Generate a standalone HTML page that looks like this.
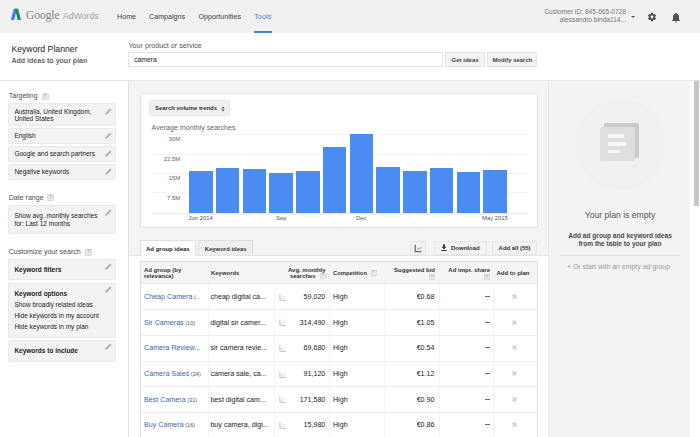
<!DOCTYPE html>
<html><head><meta charset="utf-8">
<style>
*{margin:0;padding:0;box-sizing:border-box}
html,body{width:700px;height:437px;overflow:hidden;background:#fff;font-family:"Liberation Sans",sans-serif;color:#222}
.a{position:absolute;white-space:nowrap}
</style></head><body>

<div class="a" style="left:0px;top:0px;width:700px;height:33px;background:#f1f1f1;"></div>
<svg class="a" style="left:10px;top:8px" width="12" height="13" viewBox="10 8 12 13"><polygon points="13.8,8.8 17,8.8 14.2,20 10.8,20" fill="#3f7fe0"/><polygon points="15,8.8 18.2,8.8 21,20 17.6,20" fill="#1f8f55"/></svg>
<div class="a" style="left:25.6px;top:8px;font-size:13px;line-height:13px;color:#808080;font-weight:normal;font-family:'Liberation Serif';transform:scaleX(0.877);transform-origin:0 0;">Google</div>
<div class="a" style="left:63px;top:12px;font-size:8.7px;line-height:8.7px;color:#a3a3a3;font-weight:normal;">AdWords</div>
<div class="a" style="left:117px;top:14px;font-size:7.15px;line-height:7.15px;color:#3c3c3c;font-weight:normal;">Home</div>
<div class="a" style="left:149px;top:14px;font-size:7.15px;line-height:7.15px;color:#3c3c3c;font-weight:normal;">Campaigns</div>
<div class="a" style="left:198.5px;top:14px;font-size:7.15px;line-height:7.15px;color:#3c3c3c;font-weight:normal;">Opportunities</div>
<div class="a" style="left:254px;top:13px;font-size:7.5px;line-height:7.5px;color:#4a7fd8;font-weight:normal;">Tools</div>
<div class="a" style="left:254px;top:31px;width:18px;height:2px;background:#4a7fd8;"></div>
<div class="a" style="left:536px;width:90px;text-align:right;top:9px;font-size:6.6px;line-height:6.6px;color:#777;font-weight:normal;">Customer ID: 845-665-0728</div>
<div class="a" style="left:536px;width:90px;text-align:right;top:17px;font-size:6.6px;line-height:6.6px;color:#777;font-weight:normal;">alessandro.binda114...</div>
<div class="a" style="left:631.3px;top:15.5px;width:0;height:0;border-left:2.2px solid transparent;border-right:2.2px solid transparent;border-top:2.6px solid #555"></div>
<svg class="a" style="left:647px;top:12px" width="10" height="10" viewBox="0 0 24 24"><path fill="#505050" d="M19.4 13c.04-.3.06-.6.06-1s-.02-.7-.06-1l2.1-1.65c.2-.15.24-.42.12-.64l-2-3.46c-.12-.22-.4-.3-.6-.22l-2.5 1c-.52-.4-1.08-.73-1.7-.98l-.37-2.65A.5.5 0 0 0 14 2h-4a.5.5 0 0 0-.5.42l-.37 2.650c-.62.25-1.18.58-1.7.98l-2.5-1c-.22-.08-.48 0-.6.22l-2 3.46c-.13.22-.07.5.12.64L4.57 11c-.04.32-.07.66-.07 1s.03.68.07 1l-2.1 1.65c-.2.15-.25.42-.13.64l2 3.46c.12.22.4.3.6.22l2.5-1c.52.4 1.08.73 1.7.98l.37 2.65c.04.24.25.42.5.42h4c.25 0 .46-.18.5-.42l.37-2.65c.62-.25 1.18-.58 1.7-.98l2.5 1c.22.08.48 0 .6-.22l2-3.46c.12-.22.07-.5-.12-.64L19.4 13zM12 15.5A3.5 3.5 0 1 1 12 8.5a3.5 3.5 0 0 1 0 7z"/></svg>
<svg class="a" style="left:670.4px;top:10.6px" width="12" height="13" viewBox="0 0 24 24"><path fill="#505050" d="M12 22c1.1 0 2-.9 2-2h-4c0 1.1.9 2 2 2zm6-6v-5c0-3.07-1.64-5.64-4.5-6.320V4c0-.83-.67-1.5-1.5-1.5s-1.5.67-1.5 1.5v.68C7.630 5.36 6 7.92 6 11v5l-2 2v1h16v-1l-2-2z"/></svg>
<div class="a" style="left:11.4px;top:45px;font-size:8.7px;line-height:8.7px;color:#222;font-weight:normal;">Keyword Planner</div>
<div class="a" style="left:11.4px;top:57px;font-size:7.05px;line-height:7.05px;color:#666;font-weight:bold;">Add ideas to your plan</div>
<div class="a" style="left:128.5px;top:43px;font-size:7.17px;line-height:7.17px;color:#555;font-weight:normal;">Your product or service</div>
<div class="a" style="left:128px;top:52px;width:315px;height:15px;background:#fff;border:1px solid #e2e2e2;"></div>
<div class="a" style="left:134.2px;top:57px;font-size:6.75px;line-height:6.75px;color:#222;font-weight:normal;">camera</div>
<div class="a" style="left:445.2px;top:52px;width:40px;height:15px;background:#f3f3f3;border:1px solid #e3e3e3;border-radius:1px;"></div>
<div class="a" style="left:451.6px;top:57px;font-size:6.0px;line-height:6.0px;color:#444;font-weight:bold;">Get ideas</div>
<div class="a" style="left:487px;top:52px;width:50px;height:15px;background:#f3f3f3;border:1px solid #e3e3e3;border-radius:1px;"></div>
<div class="a" style="left:492.4px;top:58px;font-size:5.95px;line-height:5.95px;color:#444;font-weight:bold;">Modify search</div>
<div class="a" style="left:0px;top:79.5px;width:700px;height:1px;background:#e5e5e5;"></div>
<div class="a" style="left:128px;top:80.5px;width:1px;height:357px;background:#e0e0e0;"></div>
<div class="a" style="left:8.7px;top:92px;font-size:7.05px;line-height:7.05px;color:#4d4d4d;font-weight:normal;">Targeting</div>
<div class="a" style="left:41.5px;top:93px;width:7px;height:7px;background:#eaeaea;border:0.6px solid #dcdcdc;border-radius:0.5px"></div>
<div class="a" style="left:41.5px;top:93.6px;width:7px;text-align:center;font-size:4.76px;line-height:5.60px;color:#aaa;font-weight:bold">?</div>
<div class="a" style="left:8px;top:103.2px;width:108px;height:23.0px;background:#f3f3f3;border:1px solid #e8e8e8;border-radius:1.5px;"></div>
<div class="a" style="left:14.4px;top:109px;font-size:6.5px;line-height:6.5px;color:#222;font-weight:normal;">Australia, United Kingdom,</div>
<div class="a" style="left:14.4px;top:116px;font-size:6.5px;line-height:6.5px;color:#222;font-weight:normal;">United States</div>
<svg class="a" style="left:104.5px;top:107.5px" width="8" height="8" viewBox="0 0 8 8"><path d="M0.2 6.8 L0.7 5.0 L5.2 0.5 L6.5 1.8 L2.0 6.3 Z" fill="#ababab"/></svg>
<div class="a" style="left:8px;top:128.2px;width:108px;height:15.600000000000023px;background:#f3f3f3;border:1px solid #e8e8e8;border-radius:1.5px;"></div>
<div class="a" style="left:14.4px;top:133px;font-size:6.5px;line-height:6.5px;color:#222;font-weight:normal;">English</div>
<svg class="a" style="left:104.5px;top:132px" width="8" height="8" viewBox="0 0 8 8"><path d="M0.2 6.8 L0.7 5.0 L5.2 0.5 L6.5 1.8 L2.0 6.3 Z" fill="#ababab"/></svg>
<div class="a" style="left:8px;top:146.0px;width:108px;height:16.0px;background:#f3f3f3;border:1px solid #e8e8e8;border-radius:1.5px;"></div>
<div class="a" style="left:14.4px;top:151px;font-size:6.5px;line-height:6.5px;color:#222;font-weight:normal;">Google and search partners</div>
<svg class="a" style="left:104.5px;top:150px" width="8" height="8" viewBox="0 0 8 8"><path d="M0.2 6.8 L0.7 5.0 L5.2 0.5 L6.5 1.8 L2.0 6.3 Z" fill="#ababab"/></svg>
<div class="a" style="left:8px;top:164.2px;width:108px;height:15.800000000000011px;background:#f3f3f3;border:1px solid #e8e8e8;border-radius:1.5px;"></div>
<div class="a" style="left:14.4px;top:169px;font-size:6.5px;line-height:6.5px;color:#222;font-weight:normal;">Negative keywords</div>
<svg class="a" style="left:104.5px;top:168px" width="8" height="8" viewBox="0 0 8 8"><path d="M0.2 6.8 L0.7 5.0 L5.2 0.5 L6.5 1.8 L2.0 6.3 Z" fill="#ababab"/></svg>
<div class="a" style="left:8.7px;top:194px;font-size:7.05px;line-height:7.05px;color:#4d4d4d;font-weight:normal;">Date range</div>
<div class="a" style="left:47px;top:194px;width:7px;height:7px;background:#eaeaea;border:0.6px solid #dcdcdc;border-radius:0.5px"></div>
<div class="a" style="left:47px;top:194.6px;width:7px;text-align:center;font-size:4.76px;line-height:5.60px;color:#aaa;font-weight:bold">?</div>
<div class="a" style="left:8px;top:204.5px;width:108px;height:29.69999999999999px;background:#f3f3f3;border:1px solid #e8e8e8;border-radius:1.5px;"></div>
<div class="a" style="left:14.4px;top:213px;font-size:6.5px;line-height:6.5px;color:#222;font-weight:normal;">Show avg. monthly searches</div>
<div class="a" style="left:14.4px;top:221px;font-size:6.5px;line-height:6.5px;color:#222;font-weight:normal;">for: Last 12 months</div>
<svg class="a" style="left:104.5px;top:208.5px" width="8" height="8" viewBox="0 0 8 8"><path d="M0.2 6.8 L0.7 5.0 L5.2 0.5 L6.5 1.8 L2.0 6.3 Z" fill="#ababab"/></svg>
<div class="a" style="left:8.7px;top:248px;font-size:7.05px;line-height:7.05px;color:#4d4d4d;font-weight:normal;">Customize your search</div>
<div class="a" style="left:85px;top:248.5px;width:7px;height:7px;background:#eaeaea;border:0.6px solid #dcdcdc;border-radius:0.5px"></div>
<div class="a" style="left:85px;top:249.1px;width:7px;text-align:center;font-size:4.76px;line-height:5.60px;color:#aaa;font-weight:bold">?</div>
<div class="a" style="left:8px;top:258.7px;width:108px;height:21.30000000000001px;background:#f3f3f3;border:1px solid #e8e8e8;border-radius:1.5px;"></div>
<div class="a" style="left:14.4px;top:267px;font-size:6.5px;line-height:6.5px;color:#222;font-weight:bold;">Keyword filters</div>
<svg class="a" style="left:104.5px;top:263px" width="8" height="8" viewBox="0 0 8 8"><path d="M0.2 6.8 L0.7 5.0 L5.2 0.5 L6.5 1.8 L2.0 6.3 Z" fill="#ababab"/></svg>
<div class="a" style="left:8px;top:283px;width:108px;height:54.80000000000001px;background:#f3f3f3;border:1px solid #e8e8e8;border-radius:1.5px;"></div>
<div class="a" style="left:14.4px;top:291px;font-size:6.5px;line-height:6.5px;color:#222;font-weight:bold;">Keyword options</div>
<svg class="a" style="left:104.5px;top:286.3px" width="8" height="8" viewBox="0 0 8 8"><path d="M0.2 6.8 L0.7 5.0 L5.2 0.5 L6.5 1.8 L2.0 6.3 Z" fill="#ababab"/></svg>
<div class="a" style="left:14.4px;top:302px;font-size:6.5px;line-height:6.5px;color:#222;font-weight:normal;">Show broadly related ideas</div>
<div class="a" style="left:14.4px;top:313px;font-size:6.5px;line-height:6.5px;color:#222;font-weight:normal;">Hide keywords in my account</div>
<div class="a" style="left:14.4px;top:324px;font-size:6.5px;line-height:6.5px;color:#222;font-weight:normal;">Hide keywords in my plan</div>
<div class="a" style="left:8px;top:340px;width:108px;height:21.80000000000001px;background:#f3f3f3;border:1px solid #e8e8e8;border-radius:1.5px;"></div>
<div class="a" style="left:14.4px;top:348px;font-size:6.5px;line-height:6.5px;color:#222;font-weight:bold;">Keywords to include</div>
<svg class="a" style="left:104.5px;top:342.5px" width="8" height="8" viewBox="0 0 8 8"><path d="M0.2 6.8 L0.7 5.0 L5.2 0.5 L6.5 1.8 L2.0 6.3 Z" fill="#ababab"/></svg>
<div class="a" style="left:129px;top:80.5px;width:419px;height:175px;background:#f4f4f4;"></div>
<div class="a" style="left:140.4px;top:92.5px;width:397.3px;height:135px;background:#fff;border:1px solid #e2e2e2;border-radius:2px;"></div>
<div class="a" style="left:149px;top:100.2px;width:80.6px;height:16.2px;background:#f0f0f0;border:1px solid #e8e8e8;border-radius:1px;"></div>
<div class="a" style="left:155px;top:106px;font-size:5.95px;line-height:5.95px;color:#333;font-weight:bold;">Search volume trends</div>
<svg class="a" style="left:220.8px;top:105.5px" width="4" height="6" viewBox="0 0 4 6"><path d="M0.4 2.5L2 0.5L3.6 2.5Z M0.4 3.5L2 5.5L3.6 3.5Z" fill="#555"/></svg>
<div class="a" style="left:151.6px;top:125px;font-size:7.1px;line-height:7.1px;color:#666;font-weight:normal;">Average monthly searches</div>
<div class="a" style="left:152px;top:134px;width:376px;height:1px;background:#f3f3f3;"></div>
<div class="a" style="left:152px;top:154px;width:376px;height:1px;background:#f3f3f3;"></div>
<div class="a" style="left:152px;top:173px;width:376px;height:1px;background:#f3f3f3;"></div>
<div class="a" style="left:152px;top:192px;width:376px;height:1px;background:#f3f3f3;"></div>
<div class="a" style="left:152px;top:212.5px;width:376px;height:1px;background:#ebebeb;"></div>
<div class="a" style="left:140.3px;width:40px;text-align:right;top:136px;font-size:6.0px;line-height:6.0px;color:#666;font-weight:normal;">30M</div>
<div class="a" style="left:140.3px;width:40px;text-align:right;top:156px;font-size:6.0px;line-height:6.0px;color:#666;font-weight:normal;">22.5M</div>
<div class="a" style="left:140.3px;width:40px;text-align:right;top:175px;font-size:6.0px;line-height:6.0px;color:#666;font-weight:normal;">15M</div>
<div class="a" style="left:140.3px;width:40px;text-align:right;top:195px;font-size:6.0px;line-height:6.0px;color:#666;font-weight:normal;">7.5M</div>
<div class="a" style="left:189.1px;top:171.29999999999998px;width:23.6px;height:41.7px;background:#4b8cf3;"></div>
<div class="a" style="left:215.84px;top:167.89999999999998px;width:23.6px;height:45.1px;background:#4b8cf3;"></div>
<div class="a" style="left:242.59px;top:168.89999999999998px;width:23.6px;height:44.1px;background:#4b8cf3;"></div>
<div class="a" style="left:269.33px;top:172.79999999999998px;width:23.6px;height:40.2px;background:#4b8cf3;"></div>
<div class="a" style="left:296.08px;top:170.89999999999998px;width:23.6px;height:42.1px;background:#4b8cf3;"></div>
<div class="a" style="left:322.82px;top:146.6px;width:23.6px;height:66.4px;background:#4b8cf3;"></div>
<div class="a" style="left:349.57px;top:134.29999999999998px;width:23.6px;height:78.7px;background:#4b8cf3;"></div>
<div class="a" style="left:376.31px;top:167.2px;width:23.6px;height:45.8px;background:#4b8cf3;"></div>
<div class="a" style="left:403.06px;top:170.79999999999998px;width:23.6px;height:42.2px;background:#4b8cf3;"></div>
<div class="a" style="left:429.81px;top:167.5px;width:23.6px;height:45.5px;background:#4b8cf3;"></div>
<div class="a" style="left:456.55px;top:171.5px;width:23.6px;height:41.5px;background:#4b8cf3;"></div>
<div class="a" style="left:483.29px;top:169.79999999999998px;width:23.6px;height:43.2px;background:#4b8cf3;"></div>
<div class="a" style="left:188.6px;top:216px;font-size:5.9px;line-height:5.9px;color:#555;font-weight:normal;">Jun 2014</div>
<div class="a" style="left:276px;top:216px;font-size:5.9px;line-height:5.9px;color:#555;font-weight:normal;">Sep</div>
<div class="a" style="left:356px;top:216px;font-size:5.9px;line-height:5.9px;color:#555;font-weight:normal;">Dec</div>
<div class="a" style="left:482px;top:216px;font-size:5.9px;line-height:5.9px;color:#555;font-weight:normal;">May 2015</div>
<div class="a" style="left:129px;top:255px;width:419px;height:1px;background:#e4e4e4;"></div>
<div class="a" style="left:140.4px;top:240.4px;width:55.3px;height:15.6px;background:#fff;border:1px solid #dedede;border-bottom:none;"></div>
<div class="a" style="left:146px;top:246px;font-size:6.0px;line-height:6.0px;color:#222;font-weight:bold;">Ad group ideas</div>
<div class="a" style="left:198px;top:240.4px;width:55px;height:14.6px;background:#efefef;border:1px solid #dedede;border-bottom:none;"></div>
<div class="a" style="left:204.7px;top:247px;font-size:5.95px;line-height:5.95px;color:#333;font-weight:bold;">Keyword ideas</div>
<div class="a" style="left:409.6px;top:241px;width:16.4px;height:13.7px;background:#f2f2f2;border:1px solid #e6e6e6;border-radius:1px;"></div>
<svg class="a" style="left:413.5px;top:243.5px" width="9" height="9" viewBox="0 0 9 9"><path d="M1.2 0.8V7.6H7.6" stroke="#6a6a6a" stroke-width="1.3" fill="none"/><path d="M2.8 6L4.6 4.4L5.4 5L7.4 3" stroke="#8a8a8a" stroke-width="0.9" fill="none"/></svg>
<div class="a" style="left:434px;top:241px;width:52.8px;height:13.7px;background:#f2f2f2;border:1px solid #e6e6e6;border-radius:1px;"></div>
<svg class="a" style="left:440.5px;top:244.3px" width="6" height="7" viewBox="0 0 6 7"><path d="M2.1 0.2H3.9V2.8H5.5L3 5.2L0.5 2.8H2.1Z M0.4 6H5.6V6.9H0.4Z" fill="#333"/></svg>
<div class="a" style="left:451px;top:245px;font-size:6.0px;line-height:6.0px;color:#333;font-weight:bold;">Download</div>
<div class="a" style="left:492px;top:241px;width:45px;height:13.7px;background:#f2f2f2;border:1px solid #e6e6e6;border-radius:1px;"></div>
<div class="a" style="left:498.6px;top:246px;font-size:5.95px;line-height:5.95px;color:#333;font-weight:bold;">Add all (55)</div>
<div class="a" style="left:140.4px;top:261.4px;width:397.5px;height:180px;background:#fff;border:1px solid #e0e0e0;"></div>
<div class="a" style="left:141.4px;top:262.4px;width:395.5px;height:21px;background:#f5f5f5;"></div>
<div class="a" style="left:141.4px;top:283.4px;width:395.5px;height:1px;background:#e8e8e8;"></div>
<div class="a" style="left:207.6px;top:284px;width:1px;height:180px;background:#f3f3f3;"></div>
<div class="a" style="left:274.3px;top:284px;width:1px;height:180px;background:#f3f3f3;"></div>
<div class="a" style="left:329px;top:284px;width:1px;height:180px;background:#f3f3f3;"></div>
<div class="a" style="left:383.6px;top:284px;width:1px;height:180px;background:#f3f3f3;"></div>
<div class="a" style="left:438.6px;top:284px;width:1px;height:180px;background:#f3f3f3;"></div>
<div class="a" style="left:493.2px;top:284px;width:1px;height:180px;background:#f3f3f3;"></div>
<div class="a" style="left:143.9px;top:267px;font-size:6.0px;line-height:6.0px;color:#333;font-weight:bold;">Ad group (by</div>
<div class="a" style="left:143.9px;top:273px;font-size:6.0px;line-height:6.0px;color:#333;font-weight:bold;">relevance)</div>
<div class="a" style="left:211px;top:271px;font-size:5.95px;line-height:5.95px;color:#333;font-weight:bold;">Keywords</div>
<div class="a" style="left:275.6px;width:50px;text-align:right;top:268px;font-size:5.97px;line-height:5.97px;color:#333;font-weight:bold;">Avg. monthly</div>
<div class="a" style="left:265.6px;width:50px;text-align:right;top:274px;font-size:5.9px;line-height:5.9px;color:#333;font-weight:bold;">searches</div>
<div class="a" style="left:319.5px;top:272.5px;width:6px;height:6px;background:#eaeaea;border:0.6px solid #dcdcdc;border-radius:0.5px"></div>
<div class="a" style="left:319.5px;top:273.1px;width:6px;text-align:center;font-size:4.08px;line-height:4.80px;color:#aaa;font-weight:bold">?</div>
<div class="a" style="left:333px;top:271px;font-size:5.83px;line-height:5.83px;color:#333;font-weight:bold;">Competition</div>
<div class="a" style="left:370.5px;top:269.5px;width:6px;height:6px;background:#eaeaea;border:0.6px solid #dcdcdc;border-radius:0.5px"></div>
<div class="a" style="left:370.5px;top:270.1px;width:6px;text-align:center;font-size:4.08px;line-height:4.80px;color:#aaa;font-weight:bold">?</div>
<div class="a" style="left:380px;width:55px;text-align:right;top:268px;font-size:5.95px;line-height:5.95px;color:#333;font-weight:bold;">Suggested bid</div>
<div class="a" style="left:428.8px;top:274px;width:6px;height:6px;background:#eaeaea;border:0.6px solid #dcdcdc;border-radius:0.5px"></div>
<div class="a" style="left:428.8px;top:274.6px;width:6px;text-align:center;font-size:4.08px;line-height:4.80px;color:#aaa;font-weight:bold">?</div>
<div class="a" style="left:435px;width:55px;text-align:right;top:267px;font-size:6.0px;line-height:6.0px;color:#333;font-weight:bold;">Ad impr. share</div>
<div class="a" style="left:483.8px;top:274px;width:6px;height:6px;background:#eaeaea;border:0.6px solid #dcdcdc;border-radius:0.5px"></div>
<div class="a" style="left:483.8px;top:274.6px;width:6px;text-align:center;font-size:4.08px;line-height:4.80px;color:#aaa;font-weight:bold">?</div>
<div class="a" style="left:496.4px;top:270px;font-size:6.04px;line-height:6.04px;color:#333;font-weight:bold;">Add to plan</div>
<div class="a" style="left:141.4px;top:309.4px;width:395.5px;height:1px;background:#eeeeee;"></div>
<div class="a" style="left:144px;top:294px;font-size:7.15px;line-height:7.15px;color:#3a65b4;font-weight:normal;">Cheap Camera<span style="font-size:5.6px;color:#555"> (...</span></div>
<div class="a" style="left:210.4px;top:294px;font-size:7.15px;line-height:7.15px;color:#222;font-weight:normal;">cheap digital ca...</div>
<svg class="a" style="left:278.5px;top:293.7px" width="8" height="7" viewBox="0 0 8 7"><path d="M0.9 0.3V6.3H7" stroke="#b8b8b8" stroke-width="0.9" fill="none"/><path d="M2 5L3.4 3.6L4.3 4.2L6.2 2.2" stroke="#c4c4c4" stroke-width="0.7" fill="none"/></svg>
<div class="a" style="left:285.3px;width:40px;text-align:right;top:294px;font-size:7.1px;line-height:7.1px;color:#222;font-weight:normal;">59,020</div>
<div class="a" style="left:333px;top:294px;font-size:7.1px;line-height:7.1px;color:#222;font-weight:normal;">High</div>
<div class="a" style="left:394.4px;width:40px;text-align:right;top:294px;font-size:7.1px;line-height:7.1px;color:#222;font-weight:normal;">€0.68</div>
<div class="a" style="left:485.2px;top:296.2px;width:4.4px;height:1.2px;background:#6a6a6a;"></div>
<svg class="a" style="left:512px;top:294.2px" width="5" height="5" viewBox="0 0 5 5"><path d="M0.6 0.6L2.2 2.5L0.6 4.4 M2.6 0.6L4.2 2.5L2.6 4.4" stroke="#c0c0c0" stroke-width="1.1" fill="none"/></svg>
<div class="a" style="left:141.4px;top:335.1px;width:395.5px;height:1px;background:#eeeeee;"></div>
<div class="a" style="left:144px;top:320px;font-size:7.15px;line-height:7.15px;color:#3a65b4;font-weight:normal;">Sir Cameras<span style="font-size:5.6px;color:#555"> (10)</span></div>
<div class="a" style="left:210.4px;top:320px;font-size:7.15px;line-height:7.15px;color:#222;font-weight:normal;">digital sir camer...</div>
<svg class="a" style="left:278.5px;top:319.1px" width="8" height="7" viewBox="0 0 8 7"><path d="M0.9 0.3V6.3H7" stroke="#b8b8b8" stroke-width="0.9" fill="none"/><path d="M2 5L3.4 3.6L4.3 4.2L6.2 2.2" stroke="#c4c4c4" stroke-width="0.7" fill="none"/></svg>
<div class="a" style="left:285.3px;width:40px;text-align:right;top:320px;font-size:7.1px;line-height:7.1px;color:#222;font-weight:normal;">314,490</div>
<div class="a" style="left:333px;top:320px;font-size:7.1px;line-height:7.1px;color:#222;font-weight:normal;">High</div>
<div class="a" style="left:394.4px;width:40px;text-align:right;top:320px;font-size:7.1px;line-height:7.1px;color:#222;font-weight:normal;">€1.05</div>
<div class="a" style="left:485.2px;top:321.59999999999997px;width:4.4px;height:1.2px;background:#6a6a6a;"></div>
<svg class="a" style="left:512px;top:319.6px" width="5" height="5" viewBox="0 0 5 5"><path d="M0.6 0.6L2.2 2.5L0.6 4.4 M2.6 0.6L4.2 2.5L2.6 4.4" stroke="#c0c0c0" stroke-width="1.1" fill="none"/></svg>
<div class="a" style="left:141.4px;top:360.8px;width:395.5px;height:1px;background:#eeeeee;"></div>
<div class="a" style="left:144px;top:345px;font-size:7.15px;line-height:7.15px;color:#3a65b4;font-weight:normal;">Camera Review...</div>
<div class="a" style="left:210.4px;top:345px;font-size:7.15px;line-height:7.15px;color:#222;font-weight:normal;">sir camera revie...</div>
<svg class="a" style="left:278.5px;top:344.8px" width="8" height="7" viewBox="0 0 8 7"><path d="M0.9 0.3V6.3H7" stroke="#b8b8b8" stroke-width="0.9" fill="none"/><path d="M2 5L3.4 3.6L4.3 4.2L6.2 2.2" stroke="#c4c4c4" stroke-width="0.7" fill="none"/></svg>
<div class="a" style="left:285.3px;width:40px;text-align:right;top:345px;font-size:7.1px;line-height:7.1px;color:#222;font-weight:normal;">69,680</div>
<div class="a" style="left:333px;top:345px;font-size:7.1px;line-height:7.1px;color:#222;font-weight:normal;">High</div>
<div class="a" style="left:394.4px;width:40px;text-align:right;top:345px;font-size:7.1px;line-height:7.1px;color:#222;font-weight:normal;">€0.54</div>
<div class="a" style="left:485.2px;top:347.3px;width:4.4px;height:1.2px;background:#6a6a6a;"></div>
<svg class="a" style="left:512px;top:345.3px" width="5" height="5" viewBox="0 0 5 5"><path d="M0.6 0.6L2.2 2.5L0.6 4.4 M2.6 0.6L4.2 2.5L2.6 4.4" stroke="#c0c0c0" stroke-width="1.1" fill="none"/></svg>
<div class="a" style="left:141.4px;top:386.4px;width:395.5px;height:1px;background:#eeeeee;"></div>
<div class="a" style="left:144px;top:371px;font-size:7.15px;line-height:7.15px;color:#3a65b4;font-weight:normal;">Camera Sales<span style="font-size:5.6px;color:#555"> (24)</span></div>
<div class="a" style="left:210.4px;top:371px;font-size:7.15px;line-height:7.15px;color:#222;font-weight:normal;">camera sale, ca...</div>
<svg class="a" style="left:278.5px;top:370.5px" width="8" height="7" viewBox="0 0 8 7"><path d="M0.9 0.3V6.3H7" stroke="#b8b8b8" stroke-width="0.9" fill="none"/><path d="M2 5L3.4 3.6L4.3 4.2L6.2 2.2" stroke="#c4c4c4" stroke-width="0.7" fill="none"/></svg>
<div class="a" style="left:285.3px;width:40px;text-align:right;top:371px;font-size:7.1px;line-height:7.1px;color:#222;font-weight:normal;">91,120</div>
<div class="a" style="left:333px;top:371px;font-size:7.1px;line-height:7.1px;color:#222;font-weight:normal;">High</div>
<div class="a" style="left:394.4px;width:40px;text-align:right;top:371px;font-size:7.1px;line-height:7.1px;color:#222;font-weight:normal;">€1.12</div>
<div class="a" style="left:485.2px;top:373.0px;width:4.4px;height:1.2px;background:#6a6a6a;"></div>
<svg class="a" style="left:512px;top:371.0px" width="5" height="5" viewBox="0 0 5 5"><path d="M0.6 0.6L2.2 2.5L0.6 4.4 M2.6 0.6L4.2 2.5L2.6 4.4" stroke="#c0c0c0" stroke-width="1.1" fill="none"/></svg>
<div class="a" style="left:141.4px;top:412.1px;width:395.5px;height:1px;background:#eeeeee;"></div>
<div class="a" style="left:144px;top:397px;font-size:7.15px;line-height:7.15px;color:#3a65b4;font-weight:normal;">Best Camera<span style="font-size:5.6px;color:#555"> (31)</span></div>
<div class="a" style="left:210.4px;top:397px;font-size:7.15px;line-height:7.15px;color:#222;font-weight:normal;">best digital cam...</div>
<svg class="a" style="left:278.5px;top:396.1px" width="8" height="7" viewBox="0 0 8 7"><path d="M0.9 0.3V6.3H7" stroke="#b8b8b8" stroke-width="0.9" fill="none"/><path d="M2 5L3.4 3.6L4.3 4.2L6.2 2.2" stroke="#c4c4c4" stroke-width="0.7" fill="none"/></svg>
<div class="a" style="left:285.3px;width:40px;text-align:right;top:397px;font-size:7.1px;line-height:7.1px;color:#222;font-weight:normal;">171,580</div>
<div class="a" style="left:333px;top:397px;font-size:7.1px;line-height:7.1px;color:#222;font-weight:normal;">High</div>
<div class="a" style="left:394.4px;width:40px;text-align:right;top:397px;font-size:7.1px;line-height:7.1px;color:#222;font-weight:normal;">€0.90</div>
<div class="a" style="left:485.2px;top:398.59999999999997px;width:4.4px;height:1.2px;background:#6a6a6a;"></div>
<svg class="a" style="left:512px;top:396.6px" width="5" height="5" viewBox="0 0 5 5"><path d="M0.6 0.6L2.2 2.5L0.6 4.4 M2.6 0.6L4.2 2.5L2.6 4.4" stroke="#c0c0c0" stroke-width="1.1" fill="none"/></svg>
<div class="a" style="left:141.4px;top:437.8px;width:395.5px;height:1px;background:#eeeeee;"></div>
<div class="a" style="left:144px;top:422px;font-size:7.15px;line-height:7.15px;color:#3a65b4;font-weight:normal;">Buy Camera<span style="font-size:5.6px;color:#555"> (16)</span></div>
<div class="a" style="left:210.4px;top:422px;font-size:7.15px;line-height:7.15px;color:#222;font-weight:normal;">buy camera, digi...</div>
<svg class="a" style="left:278.5px;top:421.8px" width="8" height="7" viewBox="0 0 8 7"><path d="M0.9 0.3V6.3H7" stroke="#b8b8b8" stroke-width="0.9" fill="none"/><path d="M2 5L3.4 3.6L4.3 4.2L6.2 2.2" stroke="#c4c4c4" stroke-width="0.7" fill="none"/></svg>
<div class="a" style="left:285.3px;width:40px;text-align:right;top:422px;font-size:7.1px;line-height:7.1px;color:#222;font-weight:normal;">15,980</div>
<div class="a" style="left:333px;top:422px;font-size:7.1px;line-height:7.1px;color:#222;font-weight:normal;">High</div>
<div class="a" style="left:394.4px;width:40px;text-align:right;top:422px;font-size:7.1px;line-height:7.1px;color:#222;font-weight:normal;">€0.86</div>
<div class="a" style="left:485.2px;top:424.3px;width:4.4px;height:1.2px;background:#6a6a6a;"></div>
<svg class="a" style="left:512px;top:422.3px" width="5" height="5" viewBox="0 0 5 5"><path d="M0.6 0.6L2.2 2.5L0.6 4.4 M2.6 0.6L4.2 2.5L2.6 4.4" stroke="#c0c0c0" stroke-width="1.1" fill="none"/></svg>
<div class="a" style="left:548px;top:80.5px;width:1px;height:357px;background:#e6e6e6;"></div>
<div class="a" style="left:549px;top:80.5px;width:141px;height:357px;background:#f3f3f3;"></div>
<div class="a" style="left:694px;top:81px;width:5px;height:124.5px;background:#c6c6c6;"></div>
<div class="a" style="left:574.5px;top:98.5px;width:91px;height:91px;border-radius:50%;background:#f0f0f0"></div>
<div class="a" style="left:603.8px;top:123.2px;width:35.2px;height:35.2px;background:#cacaca;border-radius:2px;"></div>
<div class="a" style="left:600px;top:127px;width:35.3px;height:34px;background:#dedede;border-radius:2px;"></div>
<div class="a" style="left:608.2px;top:134px;width:16px;height:3.5px;background:#f8f8f8;"></div>
<div class="a" style="left:608.2px;top:142px;width:17.6px;height:3.5px;background:#f8f8f8;"></div>
<div class="a" style="left:608.2px;top:149.8px;width:11.6px;height:3.5px;background:#f8f8f8;"></div>
<div class="a" style="left:550.0px;width:140px;text-align:center;top:211px;font-size:8.63px;line-height:8.63px;color:#555;font-weight:normal;">Your plan is empty</div>
<div class="a" style="left:550.0px;width:140px;text-align:center;top:233px;font-size:6.6px;line-height:6.6px;color:#4a4a4a;font-weight:bold;">Add ad group and keyword ideas</div>
<div class="a" style="left:550.0px;width:140px;text-align:center;top:241px;font-size:6.6px;line-height:6.6px;color:#4a4a4a;font-weight:bold;">from the table to your plan</div>
<div class="a" style="left:560px;top:255.3px;width:120px;height:1px;background:#e2e2e2;"></div>
<div class="a" style="left:548.5px;width:140px;text-align:center;top:264px;font-size:6.95px;line-height:6.95px;color:#999;font-weight:normal;">+ Or start with an empty ad group</div>
</body></html>
